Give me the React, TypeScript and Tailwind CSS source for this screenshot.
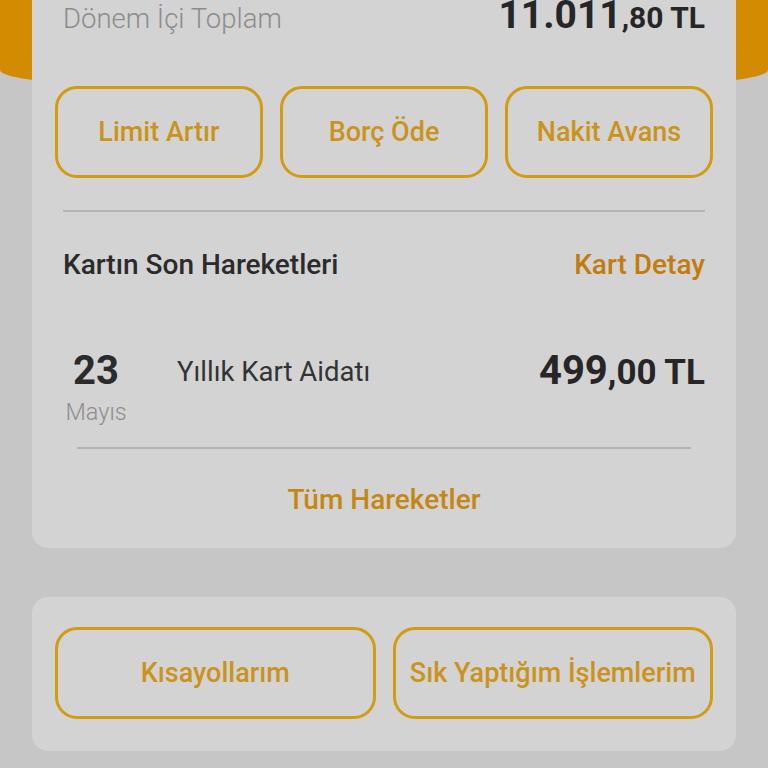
const font = { fontFamily: 'Roboto, "Noto Sans", sans-serif' };

const OutlineButton = ({ label }: { label: string }) => (
  <button className="flex h-[92px] flex-1 items-center justify-center rounded-[22px] border-[3px] border-[#d39b12] text-[27px] font-medium text-[#cb931c]">
    {label}
  </button>
);

export default function App() {
  return (
    <div className="relative h-[768px] w-[768px] overflow-hidden bg-[#c6c6c6]" style={font}>
      {/* orange header curve behind the card */}
      <div className="absolute left-0 top-0 h-[95px] w-full rounded-b-[50%_25px] bg-[#d38c02]" />

      <div className="relative mx-8 rounded-b-2xl bg-[#d3d3d3] px-[23px] pb-[32px]">
        <div className="-mt-[4px] flex items-baseline justify-between px-2">
          <span className="text-[27.5px] font-light text-[#8c8c8c]">Dönem İçi Toplam</span>
          <span className="font-bold leading-none text-[#262626]">
            <span className="text-[39px]">11.011</span>
            <span className="text-[30px]">,80 TL</span>
          </span>
        </div>

        <div className="mt-[47px] flex gap-[17px]">
          <OutlineButton label="Limit Artır" />
          <OutlineButton label="Borç Öde" />
          <OutlineButton label="Nakit Avans" />
        </div>

        <div className="mx-2 mt-[32px] h-[2px] bg-[#b4b4b4]" />

        <div className="mt-[37px] flex items-center justify-between px-2 text-[28px] font-medium leading-8">
          <span className="text-[#2b2b2b]">Kartın Son Hareketleri</span>
          <span className="text-[#c27b0f]">Kart Detay</span>
        </div>

        <div className="mt-[70px] px-2">
          <div className="flex h-[40px] items-center">
            <span className="w-[66px] text-center text-[40px] font-bold text-[#2b2b2b]">23</span>
            <span className="ml-[48px] flex-1 text-[27.5px] text-[#333333]">Yıllık Kart Aidatı</span>
            <span className="font-bold leading-none text-[#262626]">
              <span className="text-[40px]">499</span>
              <span className="text-[35px]">,00 TL</span>
            </span>
          </div>
          <div className="mt-[8px] w-[66px] text-center text-[23.5px] font-light leading-[26px] text-[#8e8e8e]">
            Mayıs
          </div>
        </div>

        <div className="mx-[22px] mt-[22px] h-[2px] bg-[#b4b4b4]" />

        <div className="mt-[35px] text-center text-[28px] font-medium leading-8 text-[#c58713]">
          Tüm Hareketler
        </div>
      </div>

      <div className="mx-8 mt-[49px] flex gap-[17px] rounded-2xl bg-[#d3d3d3] px-[23px] pb-[32px] pt-[30px]">
        <OutlineButton label="Kısayollarım" />
        <OutlineButton label="Sık Yaptığım İşlemlerim" />
      </div>
    </div>
  );
}
